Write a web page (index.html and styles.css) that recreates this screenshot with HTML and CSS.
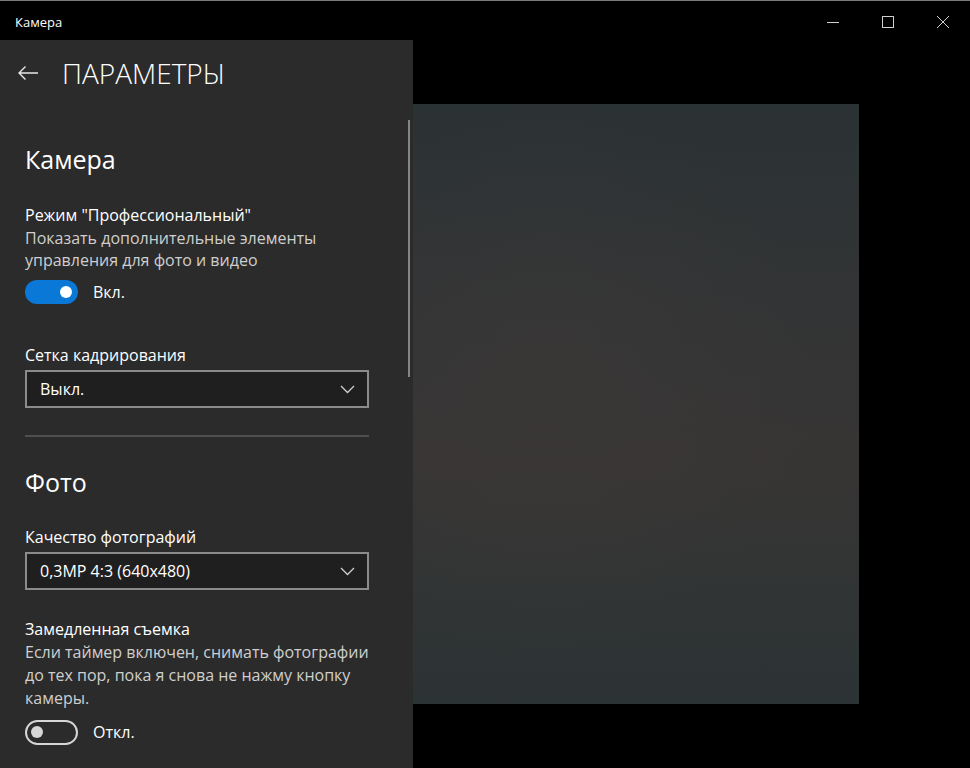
FILE: index.html
```html
<!DOCTYPE html>
<html lang="ru">
<head>
<meta charset="utf-8">
<title>Камера</title>
<link rel="stylesheet" href="styles.css">
</head>
<body>
<div class="window">
  <header class="titlebar">
    <span class="app-title">Камера</span>
    <div class="controls">
      <span class="ctl"><svg width="14" height="14" viewBox="0 0 14 14"><line x1="1" y1="7.5" x2="13" y2="7.5" stroke="#d0d0d0" stroke-width="1"/></svg></span>
      <span class="ctl"><svg width="14" height="14" viewBox="0 0 14 14"><rect x="1.5" y="1.5" width="11" height="11" fill="none" stroke="#d0d0d0" stroke-width="1"/></svg></span>
      <span class="ctl"><svg width="14" height="14" viewBox="0 0 14 14"><path d="M1 1 L13 13 M13 1 L1 13" stroke="#d0d0d0" stroke-width="1"/></svg></span>
    </div>
  </header>
  <div class="main">
    <aside class="panel">
      <div class="panel-head">
        <svg class="back" width="22" height="16" viewBox="0 0 22 16"><path d="M21 8 H2 M8.5 1.5 L2 8 L8.5 14.5" fill="none" stroke="#e8e8e8" stroke-width="1.4"/></svg>
        <h1 class="panel-title">ПАРАМЕТРЫ</h1>
      </div>
      <div class="scrollbar"></div>
      <div class="content">
        <h2 class="section">Камера</h2>
        <div class="setting pro">
          <div class="label">Режим "Профессиональный"</div>
          <div class="desc">Показать дополнительные элементы управления для фото и видео</div>
          <div class="toggle-row">
            <span class="toggle on"><span class="knob"></span></span>
            <span class="toggle-text">Вкл.</span>
          </div>
        </div>
        <div class="setting grid">
          <div class="label">Сетка кадрирования</div>
          <div class="select">
            <span>Выкл.</span>
            <svg width="15" height="9" viewBox="0 0 15 9"><path d="M1 1 L7.5 7.5 L14 1" fill="none" stroke="#cfcfcf" stroke-width="1.3"/></svg>
          </div>
        </div>
        <hr class="divider">
        <h2 class="section photo">Фото</h2>
        <div class="setting quality">
          <div class="label">Качество фотографий</div>
          <div class="select">
            <span>0,3MP 4:3 (640x480)</span>
            <svg width="15" height="9" viewBox="0 0 15 9"><path d="M1 1 L7.5 7.5 L14 1" fill="none" stroke="#cfcfcf" stroke-width="1.3"/></svg>
          </div>
        </div>
        <div class="setting slow">
          <div class="label">Замедленная съемка</div>
          <div class="desc">Если таймер включен, снимать фотографии до тех пор, пока я снова не нажму кнопку камеры.</div>
          <div class="toggle-row">
            <span class="toggle off"><span class="knob"></span></span>
            <span class="toggle-text">Откл.</span>
          </div>
        </div>
      </div>
    </aside>
    <section class="viewer">
      <div class="preview"></div>
    </section>
  </div>
</div>
</body>
</html>
```

FILE: styles.css
```css
* { box-sizing: border-box; }
html, body {
  margin: 0;
  padding: 0;
  background: #000;
  width: 970px;
  height: 768px;
  overflow: hidden;
  font-family: "Segoe UI", "Open Sans", "Noto Sans", sans-serif;
  color: #fff;
}
.window {
  width: 970px;
  height: 768px;
  border-top: 1px solid #7a7a7a;
  display: flex;
  flex-direction: column;
}
.titlebar {
  height: 39px;
  display: flex;
  align-items: center;
  justify-content: space-between;
  background: #000;
}
.app-title {
  font-size: 13px;
  padding-left: 15px;
  margin-top: 2px;
}
.controls {
  display: flex;
  height: 39px;
  margin-top: 2px;
}
.ctl {
  width: 55px;
  display: flex;
  align-items: center;
  justify-content: center;
}
.main {
  flex: 1;
  display: flex;
}
.panel {
  position: relative;
  width: 413px;
  height: 728px;
  background: #2b2b2b;
  overflow: hidden;
}
.panel-head {
  height: 66px;
  display: flex;
  align-items: center;
  padding-left: 17px;
}
.panel-title {
  margin: 0 0 0 23px;
  font-size: 28px;
  font-weight: 300;
  line-height: 36px;
}
.scrollbar {
  position: absolute;
  left: 408px;
  top: 80px;
  width: 2px;
  height: 257px;
  background: #858585;
}
.content {
  padding: 0 44px 0 25px;
}
.section {
  margin: 37px 0 0 0;
  font-size: 25px;
  font-weight: 400;
  line-height: 32px;
}
.label {
  font-size: 16px;
  line-height: 22.5px;
}
.desc {
  font-size: 16px;
  line-height: 22.5px;
  color: #cfcfcf;
}
.slow .desc { line-height: 23px; }
.pro { margin-top: 29px; }
.toggle-row {
  display: flex;
  align-items: center;
  margin-top: 8px;
}
.slow .toggle-row { margin-top: 10px; }
.toggle {
  width: 53px;
  height: 24px;
  border-radius: 13px;
  display: flex;
  align-items: center;
}
.toggle.on {
  background: #0a78d7;
  justify-content: flex-end;
  padding-right: 6px;
}
.toggle.on .knob {
  width: 12px;
  height: 12px;
  border-radius: 50%;
  background: #fff;
}
.toggle.off {
  height: 25px;
  border: 2px solid #d6d6d6;
  padding-left: 4px;
}
.toggle.off .knob {
  width: 12px;
  height: 12px;
  border-radius: 50%;
  background: #d6d6d6;
}
.toggle-text {
  margin-left: 15px;
  font-size: 16px;
}
.grid { margin-top: 40px; }
.select {
  margin-top: 4px;
  height: 38px;
  border: 2px solid #8b8b8b;
  background: #1f1f1f;
  display: flex;
  align-items: center;
  justify-content: space-between;
  padding: 0 12px 0 13px;
  font-size: 16px;
}
.divider {
  margin: 27px 0 0 0;
  border: 0;
  height: 2px;
  background: #505050;
}
.section.photo { margin-top: 28.5px; }
.quality { margin-top: 28px; }
.slow { margin-top: 28px; }
.viewer {
  flex: 1;
}
.preview {
  margin-top: 64px;
  width: 446px;
  height: 600px;
  background:
    radial-gradient(ellipse at 30% 45%, rgba(66,60,58,0.3) 0%, rgba(0,0,0,0) 60%),
    linear-gradient(180deg, #2b3234 0%, #333435 35%, #373534 60%, #2c3335 100%);
}
```
